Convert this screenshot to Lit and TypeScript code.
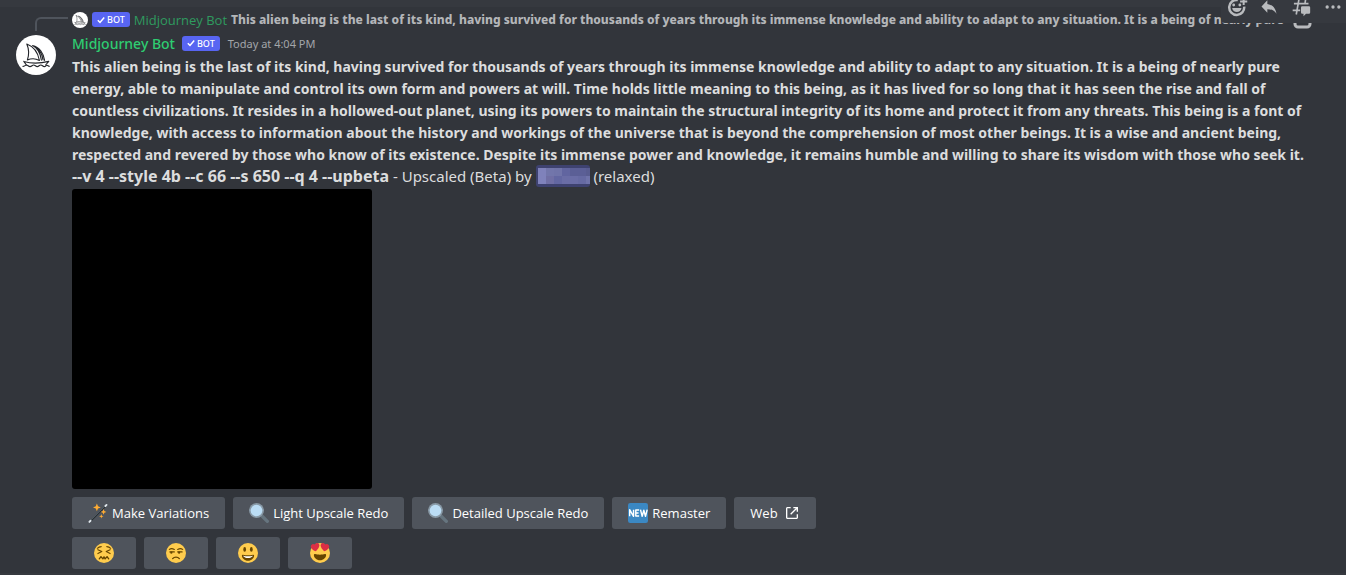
import { LitElement, html, css, svg } from "lit";
import { customElement, property } from "lit/decorators.js";

const face = svg`<circle cx="18" cy="18" r="18" fill="#ffcc4d"></circle>`;

const sailboat = svg`
  <circle cx="20" cy="20" r="20" fill="#fff"></circle>
  <g fill="none" stroke="#23252a" stroke-width="1.1" stroke-linecap="round" stroke-linejoin="round">
    <path d="M10.8 9C13 14 13 20 11.4 25C15 23.4 20 23.6 23.4 25.4C22 17.5 17.5 11.5 10.8 9Z"></path>
    <path d="M16.6 10.6C21.5 13 24.4 18.5 25.4 25.2M16.6 10.6C23.5 12 27.5 18.5 28.6 25.4M19.5 12.2C24 15 26.3 20 27 25"></path>
    <path d="M7.8 26.4C14 28.4 24 28.6 32.8 26.4L29.6 30M7.8 26.4L10.4 30"></path>
    <path d="M7 31.4C8.6 31.4 9.2 30 10.4 30C12 30 12.2 31.6 14 31.6C15.8 31.6 16.2 30 17.6 30C19.2 30 19.6 31.6 21.2 31.6C23 31.6 23.2 30 24.8 30C26.4 30 26.6 31.6 28.4 31.6C29.8 31.6 30 30 31 30.2C32 30.4 32.4 31.4 33.4 31.2"></path>
  </g>`;

const pictures: Record<string, unknown> = {
  wand: svg`
    <path d="M3.7 33.8L33.8 3.7" stroke="#292f33" stroke-width="2.4" stroke-linecap="round"></path>
    <path d="M5.5 30.5L30.5 5.5" stroke="#66757f" stroke-width="1"></path>
    <path d="M2.6 34L4.6 32M31.4 5.4L33.4 3.400" stroke="#e1e8ed" stroke-width="3.4" stroke-linecap="round"></path>
    <path fill="#ffac33" d="M16 1L18 6L23 8L18 10L16 15L14 10L9 8L14 6ZM28 11L29.4 14.6L33 16L29.4 17.4L28 21L26.6 17.4L23 16L26.6 14.6ZM24 20L25 23L28 24L25 25L24 28L23 25L20 24L23 23Z"></path>`,
  lens: svg`
    <path d="M23 23L33 33" stroke="#66757f" stroke-width="6" stroke-linecap="round"></path>
    <circle cx="13.5" cy="13.5" r="13.5" fill="#8899a6"></circle>
    <circle cx="13.5" cy="13.5" r="10.5" fill="#bbddf5"></circle>`,
  fresh: svg`
    <rect width="36" height="36" rx="4" fill="#3b88c3"></rect>
    <path d="M3 24V12L10 24V12M20 12.5H14V23.5H20M14 18H19M22.5 12L25.5 24L28.5 13L31.5 24L34.5 12" fill="none" stroke="#fff" stroke-width="2.6" stroke-linejoin="round"></path>`,
  confounded: svg`${face}
    <g fill="none" stroke="#664500" stroke-width="2" stroke-linecap="round" stroke-linejoin="round">
      <path d="M7 12L14 15.5L7 19M29 12L22 15.5L29 19M6 9.5C8 7.5 10 6.5 13 6.5M30 9.5C28 7.5 26 6.5 23 6.5"></path>
      <path stroke-width="2.4" d="M9.5 28.5L12.5 24.5L16 28.5L18 25L20 28.5L23.5 24.5L26.5 28.5"></path>
    </g>`,
  unamused: svg`${face}
    <g fill="none" stroke="#664500" stroke-width="2" stroke-linecap="round">
      <path d="M6 11.5C9 9.5 12 10 15 11.5M21 11.5C24 10 27 9.5 30 11.5M7 16H15M21 16H29"></path>
      <path stroke-width="2.4" d="M12 28C15 24.4 21 24.4 24 28"></path>
    </g>
    <circle cx="9.6" cy="17.4" r="2" fill="#664500"></circle>
    <circle cx="23.6" cy="17.4" r="2" fill="#664500"></circle>`,
  grinning: svg`${face}
    <ellipse cx="12" cy="11.5" rx="2.5" ry="4.2" fill="#664500"></ellipse>
    <ellipse cx="24" cy="11.5" rx="2.5" ry="4.2" fill="#664500"></ellipse>
    <path fill="#664500" d="M18 22C14.4 22 12 21.6 9 21C8.3 20.9 7 21 7 23C7 27 11.6 32 18 32S29 27 29 23C29 21 27.7 20.9 27 21C24 21.6 21.6 22 18 22Z"></path>
    <path fill="#fff" d="M9 23S12 24 18 24S27 23 27 23S25 27 18 27S9 23 9 23Z"></path>`,
  hearts: svg`${face}
    <path fill="#dd2e44" d="M16.7 3.2C16 .9 13.6-.4 11.3.3C9.9.7 8.9 1.7 8.4 3C7.4 2.1 6 1.7 4.6 2.1C2.3 2.8.9 5.2 1.6 7.5C2.8 10.8 6.5 13.5 10.6 14.8C13.9 12 16.5 8 16.9 4.7C17 4.2 16.9 3.7 16.7 3.2ZM19.3 3.2C20 .9 22.4-.4 24.7.3C26.1.7 27.1 1.7 27.6 3C28.6 2.1 30 1.7 31.4 2.1C33.7 2.8 35.1 5.2 34.4 7.5C33.2 10.8 29.5 13.5 25.4 14.8C22.1 12 19.5 8 19.1 4.7C19 4.2 19.1 3.7 19.3 3.2Z"></path>
    <path fill="#664500" d="M18 21C14.4 21 12 20.6 9 20C8.3 19.9 7 20 7 22C7 26 11.6 31 18 31S29 26 29 22C29 20 27.7 19.9 27 20C24 20.6 21.6 21 18 21Z"></path>`,
};

@customElement("bot-tag")
class BotTag extends LitElement {
  static styles = css`
    :host {
      display: inline-flex;
      align-items: center;
      flex: none;
      gap: 2px;
      height: 15px;
      padding: 0 5px;
      border-radius: 3px;
      background: #5865f2;
      color: #fff;
      font: 500 9px/15px "Noto Sans", sans-serif;
    }
    svg { width: 8px; height: 8px; }
  `;
  render() {
    return html`<svg viewBox="0 0 8 8" aria-hidden="true"><path d="M.8 4.3L3 6.5L7.2 1.5" fill="none" stroke="#fff" stroke-width="1.5"></path></svg><span>BOT</span>`;
  }
}

@customElement("emoji-pic")
class EmojiPic extends LitElement {
  @property() name = "";
  static styles = css`
    :host { display: block; flex: none; width: 20px; height: 20px; }
    svg { display: block; width: 100%; height: 100%; }
  `;
  render() {
    return html`<svg viewBox="0 0 36 36" aria-hidden="true">${pictures[this.name]}</svg>`;
  }
}

const actions = [
  { label: "Make Variations", icon: "wand" },
  { label: "Light Upscale Redo", icon: "lens" },
  { label: "Detailed Upscale Redo", icon: "lens" },
  { label: "Remaster", icon: "fresh" },
];
const ratings = ["confounded", "unamused", "grinning", "hearts"];

const prompt = [
  "This alien being is the last of its kind, having survived for thousands of years through its immense knowledge and ability to adapt to any situation. It is a being of nearly pure",
  "energy, able to manipulate and control its own form and powers at will. Time holds little meaning to this being, as it has lived for so long that it has seen the rise and fall of",
  "countless civilizations. It resides in a hollowed-out planet, using its powers to maintain the structural integrity of its home and protect it from any threats. This being is a font of",
  "knowledge, with access to information about the history and workings of the universe that is beyond the comprehension of most other beings. It is a wise and ancient being,",
  "respected and revered by those who know of its existence. Despite its immense power and knowledge, it remains humble and willing to share its wisdom with those who seek it.",
];

const tiles = [
  ["#7f82bb", "#7276ab", "#7074a9", "#6165a0", "#5b5f96", "#5b5f96", "#585c90"],
  ["#7f82bb", "#706fa5", "#6367a2", "#6a6da6", "#6a6da6", "#666aa3", "#6f73aa"],
];

@customElement("app-root")
class AppRoot extends LitElement {
  static styles = css`
    :host {
      display: block;
      box-sizing: border-box;
      min-height: 100vh;
      padding-top: 7px;
      overflow: hidden;
      position: relative;
      background: #36393f;
      color: #dcddde;
      font-family: "Noto Sans", sans-serif;
    }
    .message {
      display: grid;
      grid-template-columns: 56px minmax(0, 1fr);
      padding: 1px 16px 4px;
      background: #32353b;
    }
    .spine {
      align-self: end;
      height: 12px;
      margin: 0 4px 0 19px;
      border: solid #4f545c;
      border-width: 2px 0 0 2px;
      border-top-left-radius: 6px;
    }
    .reply {
      display: flex;
      align-items: center;
      gap: 4px;
      height: 23px;
      font-size: 12px;
      white-space: nowrap;
    }
    .reply .face { width: 16px; height: 16px; flex: none; }
    .reply .name { font: 400 13px "Open Sans", sans-serif; color: #2f9a5f; }
    .reply .excerpt { font-weight: 800; color: #b4b6b9; }
    .reply .attached { width: 20px; height: 20px; flex: none; margin-left: 4px; color: #b9bbbe; }
    .avatar { width: 40px; height: 40px; margin-top: 4px; }
    .header { display: flex; align-items: center; height: 24px; }
    .header .name { font-size: 14px; font-weight: 500; color: #2ecc71; margin-right: 7px; }
    .header time { margin-left: 8px; font-size: 11px; color: #a3a6aa; }
    .text { margin: 0; font-size: 15px; line-height: 22px; white-space: nowrap; }
    .text strong { font-size: 14px; font-weight: 700; line-height: 16px; }
    .text .flags { font-size: 16px; }
    .mention { display: inline-block; vertical-align: top; padding: 3px 0 3px 2px; height: 16px; border-radius: 3px; background: #3e4270; }
    .mention svg { display: block; width: 52px; height: 16px; }
    .picture { width: 300px; height: 300px; margin-top: 2px; border-radius: 3px; background: #000; }
    .row { display: flex; flex-wrap: wrap; gap: 8px; margin-top: 8px; }
    .button {
      display: flex;
      align-items: center;
      justify-content: center;
      box-sizing: border-box;
      gap: 4px;
      height: 32px;
      padding: 0 16px;
      border: 0;
      border-radius: 3px;
      background: #4f545c;
      color: #fff;
      font: 500 13px "Open Sans", sans-serif;
      text-decoration: none;
      cursor: pointer;
    }
    .button.rating { width: 64px; }
    .button.link { gap: 6px; }
    .button.link svg { width: 16px; height: 16px; }
    .toolbar {
      position: absolute;
      top: -9px;
      right: 0;
      display: flex;
      height: 32px;
      background: #36393f;
      border-radius: 4px 0 0 4px;
    }
    .tool { width: 32px; height: 32px; padding: 6px; border: 0; background: none; color: #b9bbbe; cursor: pointer; }
    .tool:last-child { width: 29px; padding-right: 3px; }
    .tool svg { display: block; width: 20px; height: 20px; overflow: visible; }
  `;

  render() {
    return html`
      <article class="message">
        <div class="spine"></div>
        <div class="reply">
          <svg class="face" viewBox="0 0 40 40" aria-hidden="true">${sailboat}</svg>
          <bot-tag></bot-tag>
          <span class="name">Midjourney Bot</span>
          <span class="excerpt">${prompt[0]}</span>
          <svg class="attached" viewBox="0 0 20 20" aria-hidden="true"><rect x="3" y="4" width="15" height="13" rx="3" fill="none" stroke="currentColor" stroke-width="3"></rect></svg>
        </div>
        <svg class="avatar" viewBox="0 0 40 40" aria-hidden="true">${sailboat}</svg>
        <div>
          <header class="header">
            <span class="name">Midjourney Bot</span>
            <bot-tag></bot-tag>
            <time>Today at 4:04 PM</time>
          </header>
          <p class="text"><strong>${prompt.map((line) => html`${line}<br>`)}</strong><strong class="flags">--v 4 --style 4b --c 66 --s 650 --q 4 --upbeta</strong> - Upscaled (Beta) by <span class="mention"><svg viewBox="0 0 52 16" aria-hidden="true">${tiles.map((line, y) => line.map((fill, x) => svg`<rect x=${x * 8} y=${y * 8} width="8" height="8" fill=${fill}></rect>`))}</svg></span> (relaxed)</p>
          <div class="picture"></div>
          <div class="row">
            ${actions.map((a) => html`<button class="button"><emoji-pic name=${a.icon}></emoji-pic>${a.label}</button>`)}
            <a class="button link" href="#">Web<svg viewBox="0 0 24 24" aria-hidden="true"><path fill="currentColor" d="M10 5V3H5.375C4.065 3 3 4.065 3 5.375V18.625C3 19.936 4.065 21 5.375 21H18.625C19.936 21 21 19.936 21 18.625V14H19V19H5V5H10ZM21 3H14V5H17.586L9.293 13.292L10.707 14.706L19 6.413V10H21V3Z"></path></svg></a>
          </div>
          <div class="row">
            ${ratings.map((r) => html`<button class="button rating" aria-label=${r}><emoji-pic name=${r}></emoji-pic></button>`)}
          </div>
        </div>
      </article>
      <div class="toolbar">
        <button class="tool" aria-label="Add reaction"><svg viewBox="0 0 24 24"><path d="M13 3.6A9 9 0 1 0 20.6 11.5" fill="none" stroke="currentColor" stroke-width="3"></path><path d="M20 1V9.6M15.7 5.3H24.300" stroke="currentColor" stroke-width="2.4"></path><circle cx="8" cy="9.6" r="1.7" fill="currentColor"></circle><circle cx="15.4" cy="9.6" r="1.7" fill="currentColor"></circle><path fill="currentColor" d="M6.2 13.2H17.4C17 16.6 14.6 18 11.8 18S6.6 16.6 6.2 13.2Z"></path></svg></button>
        <button class="tool" aria-label="Reply"><svg viewBox="0 0 24 24"><path fill="currentColor" d="M10 8.267V4L3 11.467L10 18.933V14.56C15 14.56 18.5 16.267 21 20C20 14.667 17 9.333 10 8.267Z"></path></svg></button>
        <button class="tool" aria-label="Create thread"><svg viewBox="0 0 24 24"><path d="M9.5 3L6.3 21M17.5 3L16.6 9M3.5 8H21M2 16H11" fill="none" stroke="currentColor" stroke-width="2"></path><path fill="currentColor" d="M13.5 11H21.5A1.5 1.5 0 0 1 23 12.5V18.5A1.5 1.5 0 0 1 21.5 20H18L15 23V20H13.5A1.5 1.5 0 0 1 12 18.5V12.5A1.5 1.5 0 0 1 13.5 11Z"></path></svg></button>
        <button class="tool" aria-label="More"><svg viewBox="0 0 24 24"><g fill="currentColor"><circle cx="5" cy="12" r="2"></circle><circle cx="12" cy="12" r="2"></circle><circle cx="19" cy="12" r="2"></circle></g></svg></button>
      </div>`;
  }
}
